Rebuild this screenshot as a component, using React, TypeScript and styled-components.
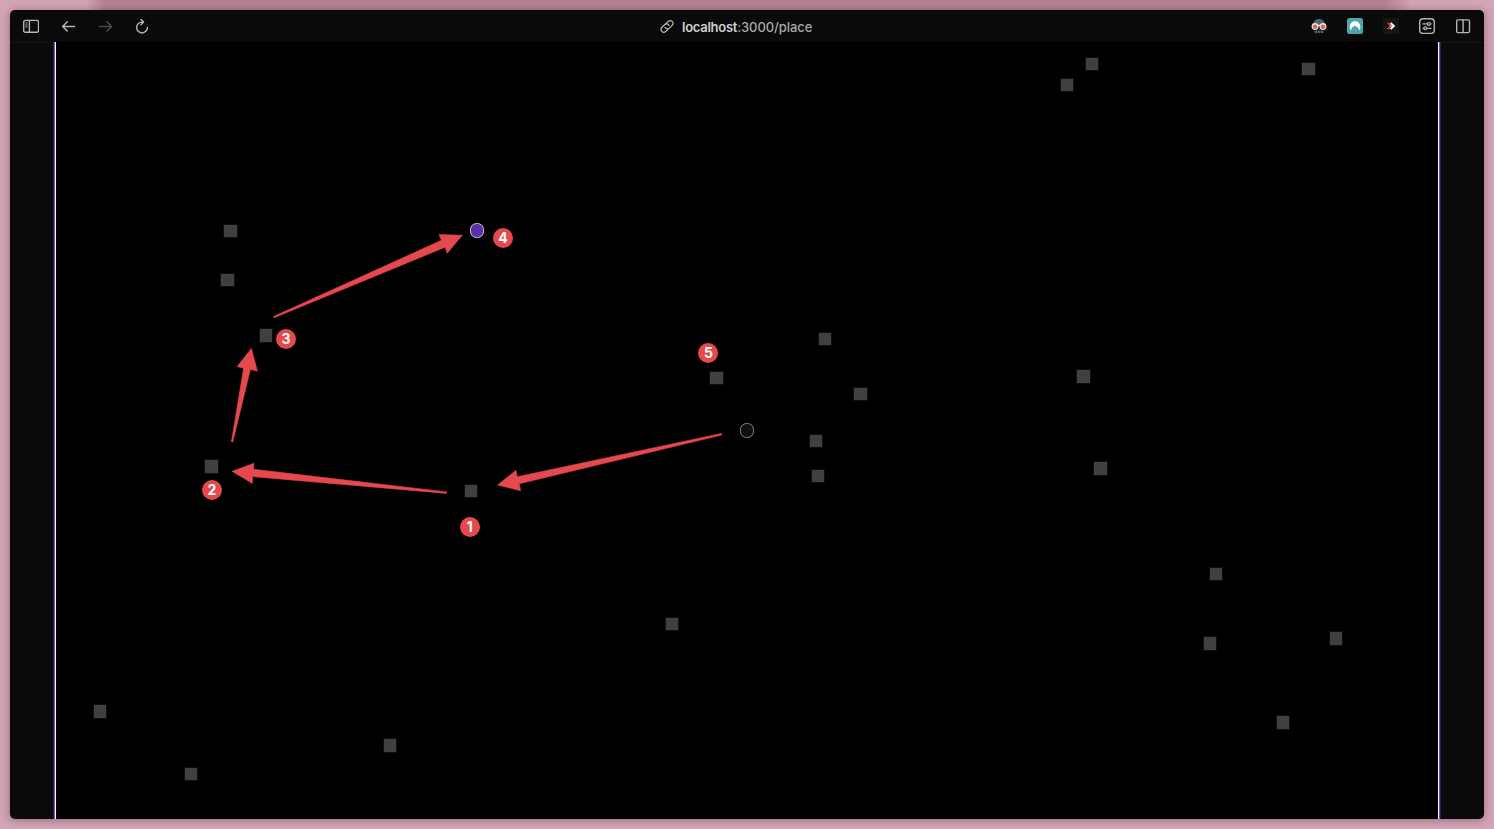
import React from "react";
import styled, { createGlobalStyle } from "styled-components";

const GlobalStyle = createGlobalStyle`
  html, body { margin: 0; padding: 0; }
  body { overflow: hidden; font-family: Inter, "Liberation Sans", sans-serif; }
  * { box-sizing: border-box; }
`;

const Desktop = styled.main`
  display: flex;
  width: 1494px;
  height: 829px;
  padding: 10px;
  background:
    linear-gradient(90deg, #d3a4b6 86px, #b48194 104px, #b48194 1385px, #d3a4b6 1412px) top / 100% 10px no-repeat,
    #d2a4b6;
`;

const Window = styled.section`
  display: flex;
  flex-direction: column;
  flex: 1;
  overflow: hidden;
  border-radius: 5px;
  background: #0a0a0a;
  box-shadow: 0 1px 8px rgba(60, 20, 40, 0.4);
`;

const Toolbar = styled.header`
  display: grid;
  grid-template-columns: 1fr auto 1fr;
  align-items: center;
  height: 33px;
  margin-bottom: -1px;
  padding: 0 13px;
  border-bottom: 1px solid #141414;
  color: #b4b4b4;
`;

const ToolGroup = styled.div<{ $gap: number; $end?: boolean }>`
  display: flex;
  gap: ${(p) => p.$gap}px;
  justify-content: ${(p) => (p.$end ? "flex-end" : "flex-start")};
`;

const Icon = styled.svg<{ $dim?: boolean; $solid?: boolean }>`
  display: block;
  flex: none;
  width: 16px;
  height: 16px;
  fill: none;
  stroke: ${(p) => (p.$solid ? "none" : "currentColor")};
  stroke-width: 1.4;
  stroke-linecap: round;
  stroke-linejoin: round;
  color: ${(p) => (p.$dim ? "#4c4c4c" : "#b4b4b4")};
`;

const Address = styled.div`
  display: flex;
  align-items: center;
  gap: 7px;
  width: 176px;
  white-space: nowrap;
  font-size: 13px;
  line-height: 16px;
`;

const Url = styled.span`
  padding-top: 1px;
  font-weight: 450;
  letter-spacing: -0.08px;
  color: #a8a8a8;
`;

const Host = styled.span`
  font-weight: 600;
  letter-spacing: -0.26px;
  color: #cfcfcf;
`;

const Page = styled.div`
  display: flex;
  flex: 1;
`;

const Gutter = styled.div`
  width: 43px;
`;

const Edge = styled.div<{ $flip?: boolean }>`
  width: 3px;
  background: linear-gradient(
    ${(p) => (p.$flip ? "270deg" : "90deg")},
    #2f1760 0 1px, #7b45d8 1px 2px, #ffffff 2px 3px
  );
`;

const Canvas = styled.div`
  position: relative;
  flex: 1;
  background: #000;
`;

const Block = styled.i`
  position: absolute;
  background: #404040;
  box-shadow: 0 0 0 1px #0e0e0e;
`;

const Player = styled.i<{ $active?: boolean }>`
  position: absolute;
  width: 14px;
  height: 15px;
  border-radius: 6.5px;
  border: 1px solid ${(p) => (p.$active ? "#cfc8dc" : "#858585")};
  background: ${(p) => (p.$active ? "#5b31a9" : "#101010")};
`;

const Arrows = styled.svg`
  position: absolute;
  inset: 0;
  width: 100%;
  height: 100%;
  fill: #e5484d;
  stroke: #e5484d;
  stroke-width: 0.6;
  stroke-linejoin: round;
`;

const Badge = styled.b`
  position: absolute;
  display: flex;
  align-items: center;
  justify-content: center;
  width: 20px;
  height: 20px;
  border-radius: 50%;
  background: #e5484d;
  color: #fff;
  font-size: 14px;
  font-weight: 700;
  line-height: 20px;
`;

const ORIGIN = { x: 56, y: 42 };

const blocks = [
  [1092, 64], [1067, 85], [1308.5, 69], [230.5, 231], [227.5, 280], [266, 335.5],
  [825, 339], [716.5, 378], [860.5, 394], [1083.5, 376.5], [816, 441], [818, 476],
  [1100.5, 468.5], [211.5, 466.5], [471, 491], [1216, 574], [672, 624],
  [1210, 643.5], [1336, 638.5], [1283, 722.5], [100, 711.5], [390, 745.5], [191, 774],
];

const badges = [
  [469.7, 527], [212, 490.4], [286, 339.4], [503, 237.9], [708.4, 353.4],
];

const arrows = [
  "721.5,433.4 517.3,476.7 516,470.3 497.6,485 520.5,490.7 519.3,483.8 721.5,435.1",
  "446.6,491.9 253.5,469.3 254,463.3 232,471.3 252.4,483.4 252.5,476.6 446.6,493.4",
  "231.4,441.8 243.6,368.3 237.2,366.5 251.4,348.4 257.4,371.1 250.4,369.4 232.8,442",
  "273.6,316.4 441.4,240.3 439,234.6 462.4,235.2 447.2,253.3 445,247.3 274.1,317.8",
];

// Whole-pixel extents: 12px on an integer centre, 13px on a half-pixel one.
const extent = (c: number) => (Number.isInteger(c) ? 12 : 13);

export default function App() {
  return (
    <>
      <GlobalStyle />
      <Desktop>
        <Window>
          <Toolbar>
            <ToolGroup $gap={21}>
              <Icon viewBox="0 0 16 16">
                <rect x="0.7" y="2.4" width="14.8" height="11.9" rx="1.6" />
                <path d="M6.4 2.4v11.9" />
                <path d="M2.8 4.9h1.3M2.8 6.9h1.3M2.8 8.9h1.3" strokeWidth="1" />
              </Icon>
              <Icon viewBox="0 0 16 16">
                <path d="M14.5 8.4H2.7M7.2 3.8 2.7 8.4 7.2 13" strokeWidth="1.5" />
              </Icon>
              <Icon viewBox="0 0 16 16" $dim>
                <path d="M2.5 8.4h12M10.1 3.8l4.5 4.6-4.5 4.6" strokeWidth="1.5" />
              </Icon>
              <Icon viewBox="0 0 16 16">
                <path d="M9.2 4.1H8a5.4 5.4 0 1 0 5.4 5.4M7 1.4l2.6 2.7L7 6.8" strokeWidth="1.45" />
              </Icon>
            </ToolGroup>
            <Address>
              <Icon viewBox="0 0 16 16">
                <g transform="rotate(-45 8 8.4)" strokeWidth="1.25">
                  <path d="M6.9 11.1H3.6a2.8 2.8 0 0 1 0-5.6h3.9a2.8 2.8 0 0 1 2.6 3.7" />
                  <path d="M9.1 5.7h3.3a2.8 2.8 0 0 1 0 5.6H8.5a2.8 2.8 0 0 1-2.6-3.7" />
                </g>
              </Icon>
              <Url><Host>localhost</Host>:3000/place</Url>
            </Address>
            <ToolGroup $gap={20} $end>
              <Icon viewBox="0 0 16 16" $solid>
                <path d="M1.8 8C1.8 3.6 4.4 1 8 1s6.2 2.6 6.2 7Z" fill="#41687a" />
                <path d="M2 8h12l-1 7.2H3Z" fill="#1a2f3b" />
                <circle cx="4" cy="8.5" r="3.4" fill="#f5ddd0" />
                <circle cx="12" cy="8.5" r="3.4" fill="#f5ddd0" />
                <path d="M7 6.8h2v1.4H7Z" fill="#f5ddd0" />
                <circle cx="4" cy="8.8" r="2.2" fill="#d56a50" />
                <circle cx="12" cy="8.8" r="2.2" fill="#d56a50" />
                <path d="M4.6 13.2h1.2v1.6H4.6ZM7.4 13.2h1.2v1.6H7.4ZM10.2 13.2h1.2v1.6h-1.2Z" fill="#7fa9bd" />
              </Icon>
              <Icon viewBox="0 0 16 16" $solid>
                <rect width="16" height="16" rx="2.3" fill="#4ba5aa" />
                <path d="M3.6 12.3A6.1 6.1 0 0 1 8 3a6.1 6.1 0 0 1 4.4 9.3L10.2 8.5l-.8.7L8 7.1 6.5 9.2l-.7-.7Z" fill="#fff" />
              </Icon>
              <Icon viewBox="0 0 16 16">
                <rect width="16" height="16" fill="#151515" stroke="none" />
                <g strokeLinecap="butt" strokeLinejoin="miter">
                  <path d="M7.6 4.9 10.8 8l-3.2 3.1" stroke="#fff" strokeWidth="2" />
                  <path d="M4.8 4.9 8 8l-3.2 3.1" stroke="#dc3833" strokeWidth="1.8" />
                  <path d="M6.8 8h2" stroke="#fff" strokeWidth="1.2" />
                </g>
              </Icon>
              <Icon viewBox="0 0 16 16">
                <rect x="0.7" y="0.8" width="14.6" height="14.6" rx="3.4" />
                <path d="M4 5.9h4.1M11.4 5.9h.7M4 10.3h.6M7.9 10.3h4.2" strokeWidth="1.2" />
                <circle cx="9.8" cy="5.9" r="1.4" strokeWidth="1.2" />
                <circle cx="6.2" cy="10.3" r="1.4" strokeWidth="1.2" />
              </Icon>
              <Icon viewBox="0 0 16 16">
                <rect x="1.7" y="1.9" width="12.8" height="12.7" rx="1.4" />
                <path d="M8.1 1.9v12.7" />
              </Icon>
            </ToolGroup>
          </Toolbar>
          <Page>
            <Gutter />
            <Edge />
            <Canvas>
              {blocks.map(([x, y]) => (
                <Block
                  key={`${x}-${y}`}
                  style={{
                    left: x - extent(x) / 2 - ORIGIN.x,
                    top: y - extent(y) / 2 - ORIGIN.y,
                    width: extent(x),
                    height: extent(y),
                  }}
                />
              ))}
              <Player style={{ left: 740 - ORIGIN.x, top: 423 - ORIGIN.y }} />
              <Player $active style={{ left: 470 - ORIGIN.x, top: 223 - ORIGIN.y }} />
              <Arrows viewBox="56 42 1382 777">
                {arrows.map((points) => (
                  <polygon key={points} points={points} />
                ))}
              </Arrows>
              {badges.map(([x, y], i) => (
                <Badge key={i} style={{ left: x - 10 - ORIGIN.x, top: y - 10 - ORIGIN.y }}>
                  {i + 1}
                </Badge>
              ))}
            </Canvas>
            <Edge $flip />
            <Gutter />
          </Page>
        </Window>
      </Desktop>
    </>
  );
}
